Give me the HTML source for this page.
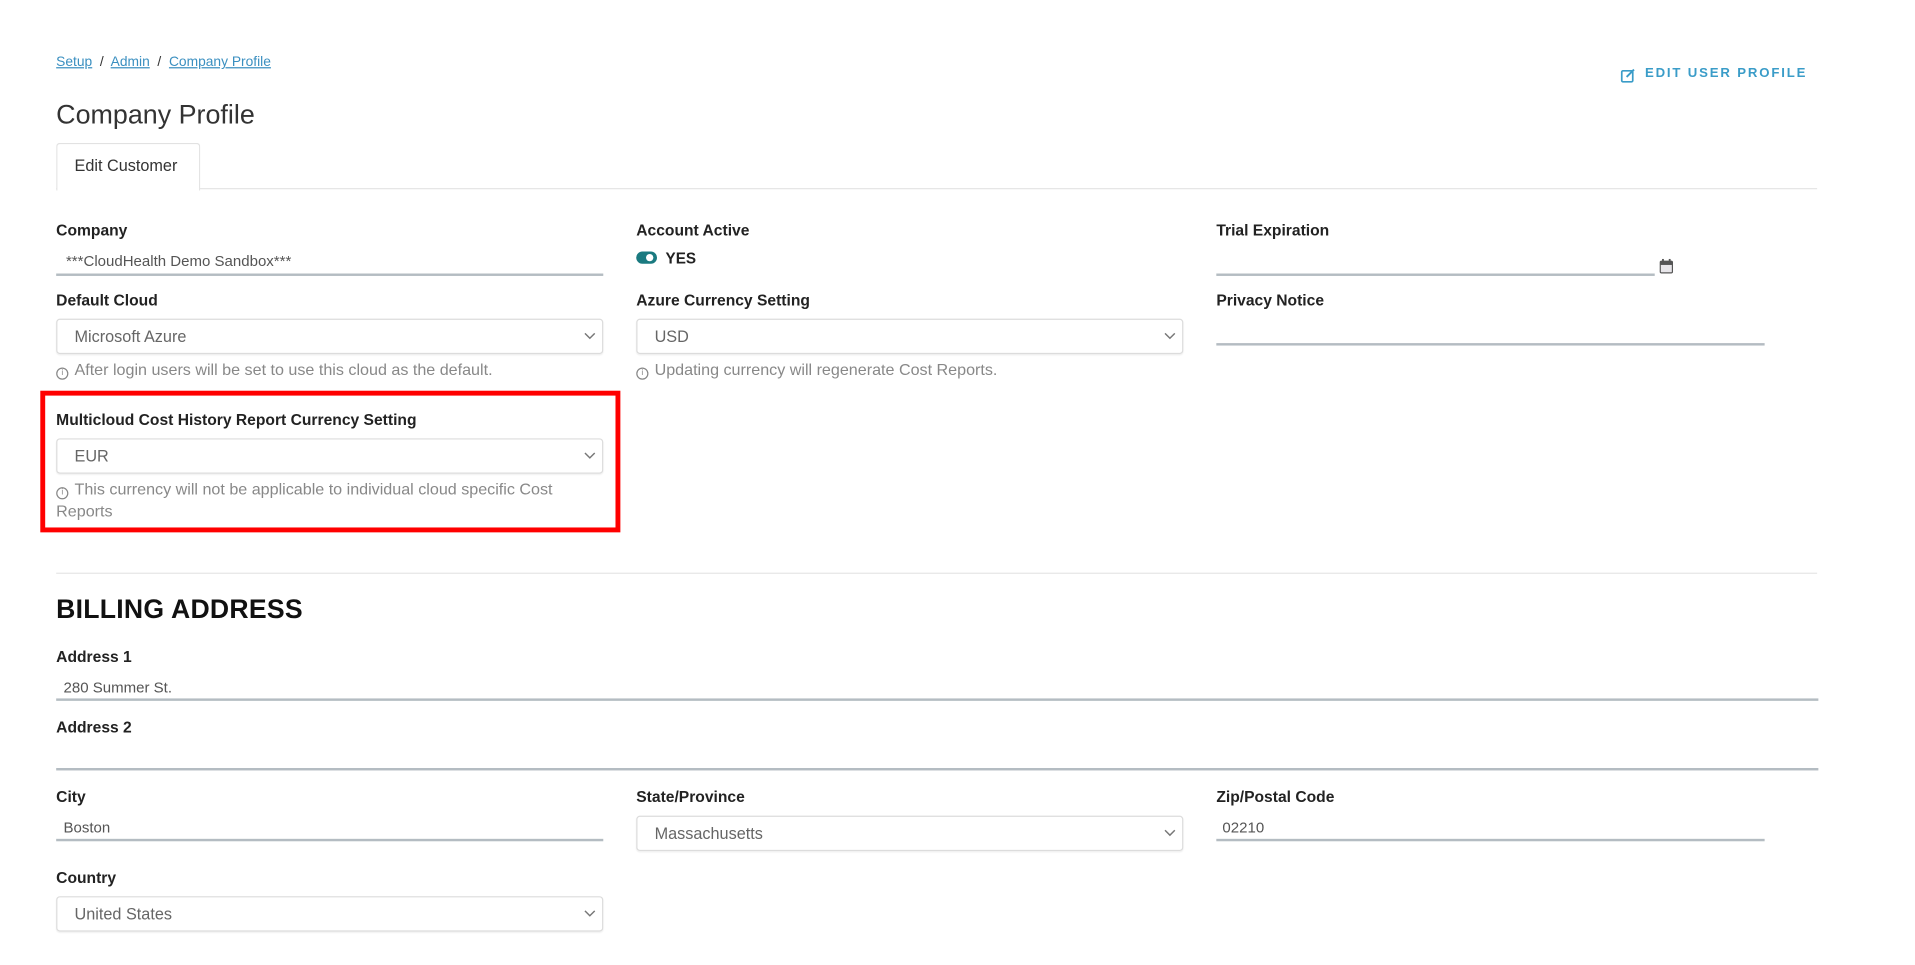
<!DOCTYPE html>
<html><head><meta charset="utf-8"><style>
html,body{margin:0;padding:0;background:#fff;width:1915px;height:959px;overflow:hidden}
#w{position:absolute;left:0;top:0;width:1570px;height:790px;transform:scale(1.2212,1.221);transform-origin:0 0;font-family:"Liberation Sans",sans-serif}
#w div,#w span{position:absolute;white-space:nowrap}
.lbl{font-size:12.8px;font-weight:bold;color:#222;line-height:14px}
.val{font-size:12.3px;color:#555;line-height:14px}
.ul{height:2px;background:#b4bcc2}
.sel{height:29px;border:1px solid #dcdcdc;border-radius:3px;box-sizing:border-box;box-shadow:0 1px 1px rgba(0,0,0,.06)}
.sel span.t{left:14px;top:6px;font-size:13.3px;color:#666}
.sel svg{position:absolute;right:5px;top:10px}
.help{font-size:13.2px;color:#888;line-height:18px}
.i{display:inline-block;width:8px;height:8px;border:1px solid #888;border-radius:50%;font-size:7px;line-height:8px;text-align:center;margin-right:5px;vertical-align:0}
.hr{height:1px;background:#e6e6e6}
</style></head><body><div id="w">
<div style="left:46px;top:45px;font-size:11.3px;color:#3a8fc0"><u>Setup</u> <span style="position:static;color:#333">&nbsp;/&nbsp;</span> <u>Admin</u> <span style="position:static;color:#333">&nbsp;/&nbsp;</span> <u>Company Profile</u></div>
<svg style="position:absolute;left:1327px;top:55px" width="13" height="13" viewBox="0 0 13 13"><rect x="1" y="3" width="9" height="9" rx="1" fill="none" stroke="#3a9cc8" stroke-width="1.4"/><path d="M5 8 L11 2" stroke="#3a9cc8" stroke-width="1.6"/></svg>
<div style="left:1347px;top:54px;font-size:10.8px;font-weight:bold;letter-spacing:1.5px;color:#3a9cc8">EDIT USER PROFILE</div>
<div style="left:46px;top:81px;font-size:22px;color:#333">Company Profile</div>
<div style="left:46px;top:117px;width:116px;height:38px;border:1px solid #e2e2e2;border-bottom:none;border-radius:3px 3px 0 0;background:#fff;z-index:2"></div>
<div style="left:61px;top:128px;font-size:13.3px;color:#333;z-index:3">Edit Customer</div>
<div class="hr" style="left:46px;top:154px;width:1442px"></div>

<div class="lbl" style="left:46px;top:182px">Company</div>
<div class="val" style="left:54px;top:207px;color:#555">***CloudHealth Demo Sandbox***</div>
<div class="ul" style="left:46px;top:224px;width:448px"></div>

<div class="lbl" style="left:521px;top:182px">Account Active</div>
<div style="left:521px;top:206px;width:17px;height:10px;border-radius:5px;background:#1a7a80"></div>
<div style="left:529px;top:208px;width:6px;height:6px;border-radius:3px;background:#fff"></div>
<div style="left:545px;top:205px;font-size:12.5px;font-weight:bold;color:#222">YES</div>

<div class="lbl" style="left:996px;top:182px">Trial Expiration</div>
<div class="ul" style="left:996px;top:224px;width:359px"></div>
<svg style="position:absolute;left:1359px;top:212px" width="11" height="12" viewBox="0 0 11 12"><rect x="0.5" y="2" width="10" height="9.5" rx="1" fill="#e8e6ea" stroke="#555"/><rect x="0.5" y="2" width="10" height="3" fill="#555"/><rect x="2" y="0" width="1.5" height="3" fill="#555"/><rect x="7.5" y="0" width="1.5" height="3" fill="#555"/></svg>

<div class="lbl" style="left:46px;top:239px">Default Cloud</div>
<div class="sel" style="left:46px;top:261px;width:448px"><span class="t">Microsoft Azure</span><svg width="10" height="7"><path d="M1 1 L5 5 L9 1" fill="none" stroke="#777" stroke-width="1.2"/></svg></div>
<div class="help" style="left:46px;top:294px"><span class="i" style="position:static">i</span>After login users will be set to use this cloud as the default.</div>

<div class="lbl" style="left:521px;top:239px">Azure Currency Setting</div>
<div class="sel" style="left:521px;top:261px;width:448px"><span class="t">USD</span><svg width="10" height="7"><path d="M1 1 L5 5 L9 1" fill="none" stroke="#777" stroke-width="1.2"/></svg></div>
<div class="help" style="left:521px;top:294px"><span class="i" style="position:static">i</span>Updating currency will regenerate Cost Reports.</div>

<div class="lbl" style="left:996px;top:239px">Privacy Notice</div>
<div class="ul" style="left:996px;top:281px;width:449px"></div>

<div style="left:33px;top:320px;width:467px;height:108px;border:4.5px solid #f00"></div>
<div class="lbl" style="left:46px;top:337px">Multicloud Cost History Report Currency Setting</div>
<div class="sel" style="left:46px;top:359px;width:448px"><span class="t">EUR</span><svg width="10" height="7"><path d="M1 1 L5 5 L9 1" fill="none" stroke="#777" stroke-width="1.2"/></svg></div>
<div class="help" style="left:46px;top:392px;white-space:normal;width:440px"><span class="i" style="position:static">i</span>This currency will not be applicable to individual cloud specific Cost Reports</div>

<div class="hr" style="left:46px;top:469px;width:1442px"></div>
<div style="left:46px;top:486px;font-size:21.8px;font-weight:bold;color:#111;letter-spacing:0.2px">BILLING ADDRESS</div>

<div class="lbl" style="left:46px;top:531px">Address 1</div>
<div class="val" style="left:52px;top:556px">280 Summer St.</div>
<div class="ul" style="left:46px;top:572px;width:1443px"></div>
<div class="lbl" style="left:46px;top:589px">Address 2</div>
<div class="ul" style="left:46px;top:629px;width:1443px"></div>

<div class="lbl" style="left:46px;top:646px">City</div>
<div class="val" style="left:52px;top:671px">Boston</div>
<div class="ul" style="left:46px;top:687px;width:448px"></div>
<div class="lbl" style="left:521px;top:646px">State/Province</div>
<div class="sel" style="left:521px;top:668px;width:448px"><span class="t">Massachusetts</span><svg width="10" height="7"><path d="M1 1 L5 5 L9 1" fill="none" stroke="#777" stroke-width="1.2"/></svg></div>
<div class="lbl" style="left:996px;top:646px">Zip/Postal Code</div>
<div class="val" style="left:1001px;top:671px">02210</div>
<div class="ul" style="left:996px;top:687px;width:449px"></div>

<div class="lbl" style="left:46px;top:712px">Country</div>
<div class="sel" style="left:46px;top:734px;width:448px"><span class="t">United States</span><svg width="10" height="7"><path d="M1 1 L5 5 L9 1" fill="none" stroke="#777" stroke-width="1.2"/></svg></div>
</div></body></html>
